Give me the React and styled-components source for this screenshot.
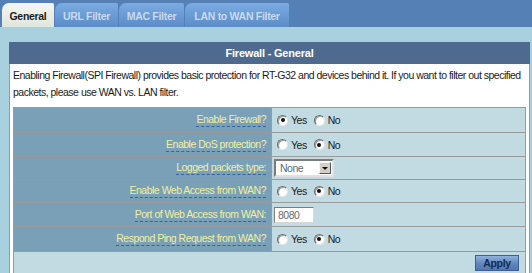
import React from "react";
import styled, { createGlobalStyle } from "styled-components";

const GlobalStyle = createGlobalStyle`
  html, body {
    margin: 0;
    padding: 0;
    background: #a9d0de;
  }
  body {
    font-family: "Liberation Sans", Arial, sans-serif;
    font-size: 10.5px;
    letter-spacing: -0.5px;
  }
`;

const Page = styled.div`
  width: 532px;
  height: 273px;
  overflow: hidden;
  background: #a9d0de;
`;

const TabBar = styled.div`
  height: 27px;
  box-sizing: border-box;
  background: #5580b6;
  display: flex;
  align-items: flex-end;
  gap: 1px;
  padding-left: 2px;
`;

const Tab = styled.div`
  width: ${(p) => p.w}px;
  height: 24px;
  box-sizing: border-box;
  display: flex;
  align-items: center;
  justify-content: center;
  padding-top: 1px;
  font-weight: bold;
  font-size: 10.5px;
  letter-spacing: -0.3px;
  border-radius: 7px 2px 0 0;
  color: ${(p) => (p.active ? "#1c1c1c" : "#c9d9ee")};
  background: ${(p) =>
    p.active
      ? "linear-gradient(#f6f6f0, #dfe6dd)"
      : "linear-gradient(#7aabe2, #5b8cc9)"};
`;

const Content = styled.div`
  padding: 15px 0 0 9px;
`;

const Panel = styled.div`
  width: 521px;
  box-sizing: border-box;
  background: #fff;
  border: 1px solid #9a9a9a;
  border-top: none;
  padding-bottom: 1px;
`;

const PanelHeader = styled.div`
  height: 22px;
  background: #4e6b8f;
  color: #fff;
  font-weight: bold;
  font-size: 11px;
  letter-spacing: -0.2px;
  display: flex;
  align-items: center;
  justify-content: center;
  margin: 0 -1px;
`;

const Description = styled.p`
  margin: 0;
  padding: 3px 6px 2px 3px;
  line-height: 17px;
  color: #1a1a1a;
`;

const Table = styled.div`
  margin: 4px 3px 1px 3px;
  border: 1px solid #9a9a9a;
  display: grid;
  grid-template-columns: 258px 1fr;
`;

const LabelCell = styled.div`
  height: ${(p) => p.h}px;
  background: #7aa0b8;
  border-bottom: 1px solid #9a9a9a;
  border-right: 1px solid #9a9a9a;
  display: flex;
  align-items: center;
  justify-content: flex-end;
  padding-right: 5px;
`;

const Label = styled.span`
  color: #f0f09c;
  border-bottom: 1px dashed #2e64a8;
  line-height: 13px;
`;

const ValueCell = styled.div`
  height: ${(p) => p.h}px;
  background: #c2dbe3;
  border-bottom: 1px solid #9a9a9a;
  display: flex;
  align-items: center;
  padding-left: 5px;
  gap: 7px;
  color: #1a1a1a;
`;

const FooterCell = styled.div`
  grid-column: 1 / 3;
  height: 21px;
  background: #c2dbe3;
  display: flex;
  align-items: center;
  justify-content: flex-end;
  padding-right: 6px;
`;

const RadioLabel = styled.label`
  display: flex;
  align-items: center;
  gap: 3px;
  color: #1a1a1a;
`;

const RadioDot = styled.span`
  width: 11px;
  height: 11px;
  box-sizing: border-box;
  border-radius: 50%;
  background: #fff;
  border: 1px solid;
  border-color: #6b6b6b #e6e6e6 #e6e6e6 #6b6b6b;
  box-shadow: inset 1px 1px 0 #a0a0a0;
  display: flex;
  align-items: center;
  justify-content: center;

  &::after {
    content: "";
    width: 4px;
    height: 4px;
    border-radius: 50%;
    background: ${(p) => (p.checked ? "#111" : "transparent")};
  }
`;

const SelectBox = styled.div`
  width: 60px;
  height: 18px;
  box-sizing: border-box;
  background: #fff;
  border: 2px solid;
  border-color: #7c7c7c #e0e0e0 #e0e0e0 #7c7c7c;
  display: flex;
  align-items: center;
  justify-content: space-between;
  padding-left: 4px;
  padding-right: 1px;
  color: #5a6a7a;
  margin-left: -3px;
`;

const SelectArrow = styled.span`
  width: 12px;
  height: 12px;
  box-sizing: border-box;
  background: #d4d0c8;
  border: 1px solid;
  border-color: #f4f4f4 #555 #555 #f4f4f4;
  display: flex;
  align-items: center;
  justify-content: center;

  &::after {
    content: "";
    border-left: 3px solid transparent;
    border-right: 3px solid transparent;
    border-top: 3px solid #111;
  }
`;

const TextInput = styled.div`
  width: 40px;
  height: 16px;
  box-sizing: border-box;
  background: #fff;
  border: 1px solid;
  border-color: #7c7c7c #d8d8d8 #d8d8d8 #7c7c7c;
  display: flex;
  align-items: center;
  padding-left: 3px;
  color: #6a6a6a;
  margin-left: -3px;
`;

const ApplyButton = styled.button`
  width: 44px;
  height: 16px;
  padding: 0;
  border: 1px solid #3f5f8f;
  background: linear-gradient(#8fb1dc, #5f86bd 55%, #5077b0);
  color: #142a50;
  font-family: "Liberation Sans", Arial, sans-serif;
  font-weight: bold;
  font-size: 10.5px;
  letter-spacing: -0.3px;
`;

function YesNo({ value }) {
  return (
    <>
      <RadioLabel>
        <RadioDot checked={value} />
        Yes
      </RadioLabel>
      <RadioLabel>
        <RadioDot checked={!value} />
        No
      </RadioLabel>
    </>
  );
}

const rows = [
  { label: "Enable Firewall?", h: 24, control: <YesNo value={true} /> },
  { label: "Enable DoS protection?", h: 23, control: <YesNo value={false} /> },
  {
    label: "Logged packets type:",
    h: 22,
    control: (
      <SelectBox>
        None
        <SelectArrow />
      </SelectBox>
    ),
  },
  { label: "Enable Web Access from WAN?", h: 22, control: <YesNo value={false} /> },
  { label: "Port of Web Access from WAN:", h: 23, control: <TextInput>8080</TextInput> },
  { label: "Respond Ping Request from WAN?", h: 24, control: <YesNo value={false} /> },
];

export default function App() {
  return (
    <Page>
      <GlobalStyle />
      <TabBar>
        <Tab w={52} active>General</Tab>
        <Tab w={63}>URL Filter</Tab>
        <Tab w={65}>MAC Filter</Tab>
        <Tab w={104}>LAN to WAN Filter</Tab>
      </TabBar>
      <Content>
        <Panel>
          <PanelHeader>Firewall - General</PanelHeader>
          <Description>
            Enabling Firewall(SPI Firewall) provides basic protection for RT-G32 and devices
            behind it. If you want to filter out specified packets, please use WAN vs. LAN
            filter.
          </Description>
          <Table>
            {rows.map((r) => (
              <React.Fragment key={r.label}>
                <LabelCell h={r.h}>
                  <Label>{r.label}</Label>
                </LabelCell>
                <ValueCell h={r.h}>{r.control}</ValueCell>
              </React.Fragment>
            ))}
            <FooterCell>
              <ApplyButton>Apply</ApplyButton>
            </FooterCell>
          </Table>
        </Panel>
      </Content>
    </Page>
  );
}
